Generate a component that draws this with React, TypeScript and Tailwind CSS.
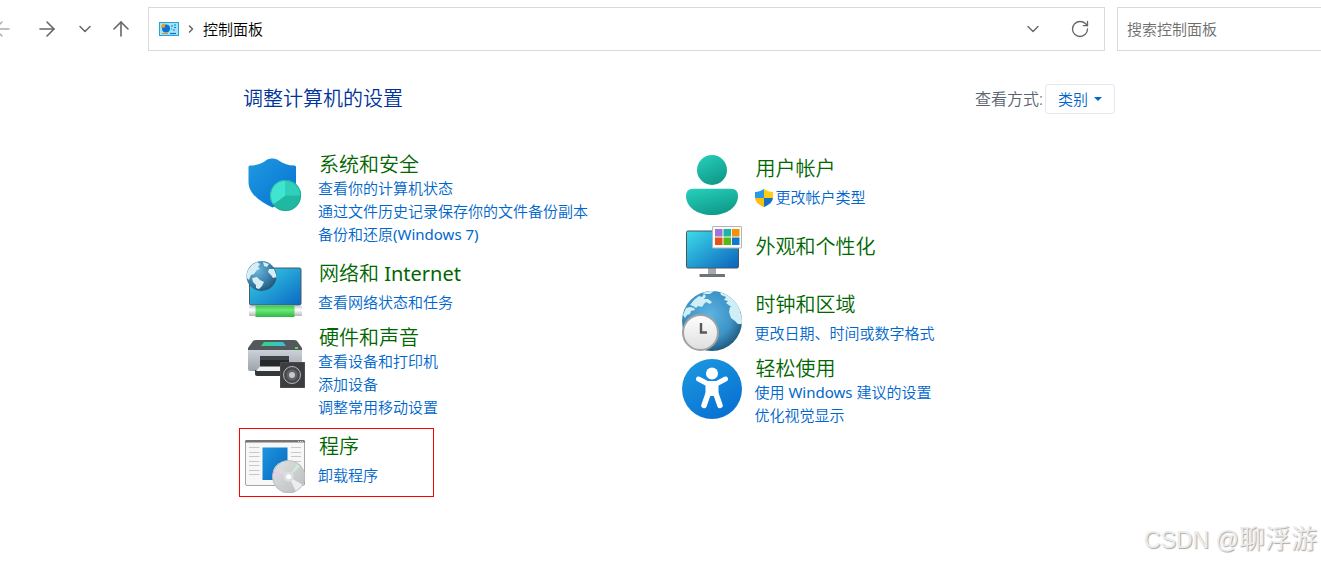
import type { ReactNode } from 'react';
import { ArrowLeft, ArrowRight, ArrowUp, ChevronDown, ChevronRight, RotateCw } from 'lucide-react';

type Category = {
  title: string;
  icon: ReactNode;
  links: string[];
  shielded?: boolean;
  marked?: boolean;
};

function SecurityIcon() {
  return (
    <svg viewBox="0 0 60 60" className="size-15 shrink-0" aria-hidden="true">
      <defs>
        <linearGradient id="shieldBlue" x1="0" y1="0" x2="1" y2="1">
          <stop offset="0" stopColor="#1f9ae0" />
          <stop offset="1" stopColor="#0670d2" />
        </linearGradient>
      </defs>
      <path d="M5 10.500C12 10.500 17 8.500 21.500 5C25 3 29.500 3 33 5C37.500 8.500 43 10.500 49.500 10.500Q51 10.500 51 12V27C51 39 40 47 27.500 52.500C14 46.500 3.500 38 3.500 27V12Q3.500 10.500 5 10.500Z" fill="url(#shieldBlue)" />
      <circle cx="40.500" cy="40.500" r="15.500" fill="#1fb8a2" />
      <path d="M40.500 40.500V25A15.500 15.500 0 0 0 28 49.500Z" fill="#3fe5d0" />
      <path d="M40.500 40.500V25A15.500 15.500 0 0 1 56 40.500Z" fill="#30cfb9" />
      <circle cx="40.500" cy="40.500" r="15.200" fill="none" stroke="#189c8a" strokeWidth="0.600" />
    </svg>
  );
}

function NetworkIcon() {
  return (
    <svg viewBox="0 0 60 60" className="size-15 shrink-0" aria-hidden="true">
      <defs>
        <linearGradient id="netScreen" x1="0" y1="0" x2="1" y2="1">
          <stop offset="0" stopColor="#38d5e6" />
          <stop offset="1" stopColor="#0b68c4" />
        </linearGradient>
        <radialGradient id="netGlobe" cx="0.35" cy="0.3" r="0.8">
          <stop offset="0" stopColor="#6fb7dc" />
          <stop offset="0.6" stopColor="#387da8" />
          <stop offset="1" stopColor="#1d4d70" />
        </radialGradient>
        <linearGradient id="netPipe" x1="0" y1="0" x2="0" y2="1">
          <stop offset="0" stopColor="#38c94c" />
          <stop offset="0.4" stopColor="#6ee878" />
          <stop offset="1" stopColor="#2eb743" />
        </linearGradient>
        <linearGradient id="netCap" x1="0" y1="0" x2="0" y2="1">
          <stop offset="0" stopColor="#c9cdd0" />
          <stop offset="0.4" stopColor="#ffffff" />
          <stop offset="1" stopColor="#b3b8bc" />
        </linearGradient>
        <clipPath id="netClip">
          <circle cx="16.500" cy="16" r="15" />
        </clipPath>
      </defs>
      <rect x="4.500" y="8" width="51.500" height="37" rx="1.500" fill="url(#netScreen)" stroke="#4b5963" />
      <rect x="4" y="46" width="53" height="10" rx="1" fill="url(#netCap)" />
      <rect x="10.500" y="45.500" width="39" height="11.500" fill="url(#netPipe)" />
      <circle cx="16.500" cy="16" r="15" fill="url(#netGlobe)" />
      <g clipPath="url(#netClip)" fill="#d5edf3">
        <path d="M3 10L7 5L12 2L15 4L13 7L15 9L12 10L9 14L6 15L4 20L1 17Z" />
        <path d="M18 2L24 4L22 7L19 6Z" />
        <path d="M24 9L29 9L32 17L28 18L26 15L23 12Z" />
        <path d="M7 18L12 17L15 20L19 22L17 26L14 29L11 28L11 25L8 22Z" />
      </g>
    </svg>
  );
}

function HardwareIcon() {
  return (
    <svg viewBox="0 0 60 60" className="size-15 shrink-0" aria-hidden="true">
      <defs>
        <linearGradient id="printerBody" x1="0" y1="0" x2="0" y2="1">
          <stop offset="0" stopColor="#ccd1d8" />
          <stop offset="1" stopColor="#9ba3ad" />
        </linearGradient>
        <linearGradient id="printerGlow" x1="0" y1="0" x2="1" y2="0">
          <stop offset="0" stopColor="#33d67a" />
          <stop offset="1" stopColor="#38bfe0" />
        </linearGradient>
      </defs>
      <path d="M11 12H49Q51 12 52 13L57 20V23H3V20L8 13Q9 12 11 12Z" fill="#53585e" />
      <path d="M19 14H38L41 18H16Z" fill="url(#printerGlow)" />
      <rect x="50" y="19" width="3" height="2" fill="#52df52" />
      <path d="M3 22H57V42Q57 43 56 43H5Q3 43 3 41Z" fill="url(#printerBody)" />
      <rect x="15" y="28" width="29" height="11" fill="#25282c" />
      <rect x="15" y="28" width="29" height="4" fill="#3f4449" />
      <path d="M10 42H40V48H12Q10 48 10 46Z" fill="#34383c" />
      <path d="M15 38.500H42V43H11Z" fill="#eef0f2" />
      <rect x="35" y="34" width="25" height="26" rx="1" fill="#3d3d3f" />
      <rect x="35.500" y="34.500" width="24" height="25" rx="1" fill="none" stroke="#4c4c4f" />
      <circle cx="47" cy="47" r="8.500" fill="#49494d" stroke="#b3b6b9" strokeWidth="1" />
      <circle cx="47" cy="47" r="5.500" fill="#626468" />
      <circle cx="47" cy="47" r="3" fill="#c7cacc" />
    </svg>
  );
}

function ProgramsIcon() {
  const lines = [14, 19, 23, 28, 32, 37, 41];
  return (
    <svg viewBox="0 0 60 60" className="size-15 shrink-0" aria-hidden="true">
      <defs>
        <linearGradient id="appBlue" x1="0" y1="0" x2="1" y2="1">
          <stop offset="0" stopColor="#1c95dd" />
          <stop offset="1" stopColor="#0967c0" />
        </linearGradient>
        <linearGradient id="disc" x1="0" y1="0" x2="1" y2="1">
          <stop offset="0" stopColor="#e2e4e5" />
          <stop offset="0.5" stopColor="#cdd0d1" />
          <stop offset="1" stopColor="#b8bcbe" />
        </linearGradient>
      </defs>
      <rect x="0.500" y="7.500" width="59" height="45" rx="1.500" fill="#f7f7f7" stroke="#a5a5a5" />
      <path d="M0 9.500V8.500Q0 7 1.500 7H58.500Q60 7 60 8.500V9.500Z" fill="#747474" />
      <path d="M53 8.500H58" stroke="#d8d8d8" strokeDasharray="1 1" />
      {lines.map((y) => (
        <path key={y} d={`M4 ${y}.5H14.500M46 ${y}.5H56`} stroke="#c6c8c9" />
      ))}
      <rect x="17.500" y="14.500" width="25" height="32.500" fill="url(#appBlue)" />
      <circle cx="43.700" cy="43.700" r="16.500" fill="url(#disc)" />
      <path d="M43.700 43.700L28 38A16.500 16.500 0 0 1 34 30Z" fill="#d9dcdd" />
      <path d="M43.700 43.700L29 37.500L28 40.500Z" fill="#efc6ee" />
      <path d="M43.700 43.700L52 31L55 33.500Z" fill="#cfead6" />
      <path d="M43.700 43.700L58 52A16.500 16.500 0 0 1 51 58.500Z" fill="#eceded" />
      <circle cx="43.700" cy="43.700" r="16.200" fill="none" stroke="#b0b4b6" strokeWidth="0.600" />
      <circle cx="43.700" cy="43.700" r="5" fill="#dcdedf" />
      <circle cx="43.700" cy="43.700" r="2.500" fill="#ffffff" />
    </svg>
  );
}

function UserIcon() {
  return (
    <svg viewBox="0 0 60 60" className="size-15 shrink-0" aria-hidden="true">
      <defs>
        <linearGradient id="userTeal" x1="0" y1="0" x2="0.5" y2="1">
          <stop offset="0" stopColor="#27d1bd" />
          <stop offset="1" stopColor="#109c8b" />
        </linearGradient>
      </defs>
      <circle cx="30" cy="15" r="15" fill="url(#userTeal)" />
      <path d="M11 33.700H49Q56 33.700 56 41C56 52 45 60 30 60S4 52 4 41Q4 33.700 11 33.700Z" fill="url(#userTeal)" />
    </svg>
  );
}

function AppearanceIcon() {
  return (
    <svg viewBox="0 0 60 60" className="size-15 shrink-0" aria-hidden="true">
      <defs>
        <linearGradient id="lookScreen" x1="0" y1="0" x2="1" y2="1">
          <stop offset="0" stopColor="#3ddcea" />
          <stop offset="1" stopColor="#0a62bd" />
        </linearGradient>
      </defs>
      <rect x="26" y="45" width="8" height="7" fill="#a6abb0" />
      <rect x="17.500" y="51" width="25.500" height="3" rx="0.500" fill="#6c747b" />
      <rect x="4.500" y="8" width="52" height="37" rx="1.500" fill="url(#lookScreen)" stroke="#4a555e" />
      <rect x="30.500" y="3.500" width="29" height="21.500" rx="0.500" fill="#fbfbfb" stroke="#b5b5b5" />
      <rect x="33" y="6" width="7.500" height="7.500" fill="#a074da" />
      <rect x="41.500" y="6" width="7.500" height="7.500" fill="#1bb5a2" />
      <rect x="50" y="6" width="7.500" height="7.500" fill="#f59107" />
      <rect x="33" y="14.500" width="7.500" height="7.500" fill="#e55414" />
      <rect x="41.500" y="14.500" width="7.500" height="7.500" fill="#57b910" />
      <rect x="50" y="14.500" width="7.500" height="7.500" fill="#0b78d2" />
    </svg>
  );
}

function ClockIcon() {
  return (
    <svg viewBox="0 0 60 60" className="size-15 shrink-0" aria-hidden="true">
      <defs>
        <radialGradient id="bigGlobe" cx="0.45" cy="0.4" r="0.65">
          <stop offset="0" stopColor="#5db5e2" />
          <stop offset="0.6" stopColor="#3d93c6" />
          <stop offset="1" stopColor="#1c506f" />
        </radialGradient>
        <linearGradient id="clockFace" x1="0" y1="0" x2="0" y2="1">
          <stop offset="0" stopColor="#ffffff" />
          <stop offset="1" stopColor="#dedede" />
        </linearGradient>
        <clipPath id="bigClip">
          <circle cx="30" cy="30" r="30" />
        </clipPath>
      </defs>
      <circle cx="30" cy="30" r="30" fill="url(#bigGlobe)" />
      <g clipPath="url(#bigClip)" fill="#d0eef5">
        <path d="M1 24L4 17L8 16L12 17L13 19L9 20L8 23L5 24L3 27Z" />
        <path d="M8 14L12 9L17 5L20 6L22 3L24 5L22 8L26 8L30 11L28 13L24 11L22 13L20 16L16 15L14 17L11 15Z" />
        <path d="M20 2L28 0L32 0L28 3L23 3Z" />
        <path d="M38 1L48 5L55 12L59 20L56 22L52 17L48 15L44 12L46 10L42 9L44 6L39 4Z" />
        <path d="M48 16L53 15L57 20L60 24L60 33L56 33L53 30L49 27L47 21Z" />
      </g>
      <circle cx="18.500" cy="41.500" r="17.500" fill="url(#clockFace)" stroke="#a3a1a1" strokeWidth="2" />
      <path d="M19 32V41.500H25" fill="none" stroke="#595959" strokeWidth="2.400" />
    </svg>
  );
}

function EaseIcon() {
  return (
    <svg viewBox="0 0 60 60" className="size-15 shrink-0" aria-hidden="true">
      <defs>
        <linearGradient id="easeBlue" x1="0" y1="0" x2="0.6" y2="1">
          <stop offset="0" stopColor="#1e9ae1" />
          <stop offset="1" stopColor="#0873d3" />
        </linearGradient>
      </defs>
      <circle cx="30" cy="30" r="30" fill="url(#easeBlue)" />
      <circle cx="30" cy="14.500" r="6" fill="white" />
      <path d="M16.500 20L25 24.500H35L43.500 20" fill="none" stroke="white" strokeWidth="5" strokeLinecap="round" strokeLinejoin="round" />
      <path d="M23.500 23H36.500V34L37 37H23L23.500 34Z" fill="white" />
      <path d="M26 35L22 46.500M34 35L38 46.500" stroke="white" strokeWidth="5.500" strokeLinecap="round" />
    </svg>
  );
}

function AdminShield() {
  return (
    <svg viewBox="0 0 18 18" className="size-4.5 shrink-0" aria-hidden="true">
      <defs>
        <clipPath id="adminClip">
          <path d="M0 3C4 3 6.500 1.500 9 0C11.500 1.500 14 3 18 3V8C18 13 14 16 9 18C4 16 0 13 0 8Z" />
        </clipPath>
      </defs>
      <g clipPath="url(#adminClip)">
        <rect width="9" height="9" fill="#2a9be3" />
        <rect x="9" width="9" height="9" fill="#ffcb14" />
        <rect y="9" width="9" height="9" fill="#fdbc10" />
        <rect x="9" y="9" width="9" height="9" fill="#1673c4" />
      </g>
    </svg>
  );
}

function PanelIcon() {
  return (
    <svg viewBox="0 0 20 14" className="h-3.5 w-5" aria-hidden="true">
      <rect x="0.500" y="0.500" width="19" height="13" fill="#a2e3fa" stroke="#22a3dc" />
      <circle cx="7" cy="6.500" r="4" fill="#0a74cf" />
      <path d="M6 5.500V1.500A4 4 0 0 0 2 5.500Z" fill="#f59a1c" />
      <path d="M12 4H14M12 7H13M15 3H17M15 5.500H17M14 8H16" stroke="#1676c2" />
      <path d="M3 11.500H9" stroke="#f08a1a" strokeWidth="1.200" />
      <path d="M11 11.500H17" stroke="#126fc4" strokeWidth="1.200" />
    </svg>
  );
}

const leftCategories: Category[] = [
  {
    title: '系统和安全',
    icon: <SecurityIcon />,
    links: ['查看你的计算机状态', '通过文件历史记录保存你的文件备份副本', '备份和还原(Windows 7)'],
  },
  { title: '网络和 Internet', icon: <NetworkIcon />, links: ['查看网络状态和任务'] },
  { title: '硬件和声音', icon: <HardwareIcon />, links: ['查看设备和打印机', '添加设备', '调整常用移动设置'] },
  { title: '程序', icon: <ProgramsIcon />, links: ['卸载程序'], marked: true },
];

const rightCategories: Category[] = [
  { title: '用户帐户', icon: <UserIcon />, links: ['更改帐户类型'], shielded: true },
  { title: '外观和个性化', icon: <AppearanceIcon />, links: [] },
  { title: '时钟和区域', icon: <ClockIcon />, links: ['更改日期、时间或数字格式'] },
  { title: '轻松使用', icon: <EaseIcon />, links: ['使用 Windows 建议的设置', '优化视觉显示'] },
];

// Spacing of the text block depends on how many task links sit under the title
function textSpacing(count: number) {
  if (count === 0) return 'pt-3.5';
  if (count === 1) return 'pt-1 gap-[5px]';
  return 'pb-1.5';
}

// Latin words take the regular weight, Chinese stays a step lighter
function MixedText({ text }: { text: string }) {
  return (
    <span>
      {text.split(/([A-Za-z0-9() ]+)/).map((part, index) =>
        index % 2 === 1 ? (
          <span key={index} className="font-normal">
            {part}
          </span>
        ) : (
          part
        ),
      )}
    </span>
  );
}

function CategoryItem({ title, icon, links, shielded, marked }: Category) {
  return (
    <section
      className={`flex min-h-16 items-start gap-[13px] pl-[5px] ${marked ? 'w-[193px] pb-[3px] outline outline-[#ff0000]' : ''}`}
    >
      <div className="pt-1">{icon}</div>
      <div className={`flex flex-col ${textSpacing(links.length)}`}>
        <h2 className="pt-0.5 pl-px text-[20px] leading-[24px] font-[350] text-[#006600]">
          <a href="#">
            <MixedText text={title} />
          </a>
        </h2>
        {links.length > 0 && (
          <ul className="text-[15px] leading-[23px] text-[#0066cc]">
            {links.map((link) => (
              <li key={link}>
                <a href="#" className="inline-flex items-center gap-[3px]">
                  {shielded && <AdminShield />}
                  <MixedText text={link} />
                </a>
              </li>
            ))}
          </ul>
        )}
      </div>
    </section>
  );
}

function Toolbar() {
  return (
    <header className="flex items-center pt-[7px]">
      <nav className="flex w-[148px] shrink-0 items-center text-[#666666]">
        <button type="button" aria-label="后退" className="-ml-2.5 text-[#aaaaaa]">
          <ArrowLeft size={24} strokeWidth={1.4} />
        </button>
        <button type="button" aria-label="前进" className="ml-[21px]">
          <ArrowRight size={24} strokeWidth={1.6} />
        </button>
        <button type="button" aria-label="最近浏览的位置" className="ml-4">
          <ChevronDown size={20} strokeWidth={1.8} />
        </button>
        <button type="button" aria-label="向上" className="ml-3.5">
          <ArrowUp size={24} strokeWidth={1.6} />
        </button>
      </nav>
      <div className="flex h-11 flex-1 items-center border border-[#d9d9d9] pr-3.5 pl-2.5">
        <PanelIcon />
        <ChevronRight size={12} strokeWidth={3} className="mx-[6px] text-[#666666]" />
        <a href="#" className="flex-1 text-[15px] text-black">
          控制面板
        </a>
        <button type="button" aria-label="展开" className="text-[#666666]">
          <ChevronDown size={20} strokeWidth={1.6} />
        </button>
        <button type="button" aria-label="刷新" className="ml-[27px] text-[#666666]">
          <RotateCw size={20} strokeWidth={1.6} />
        </button>
      </div>
      <input
        type="search"
        aria-label="搜索控制面板"
        placeholder="搜索控制面板"
        className="ml-3 h-11 w-[204px] shrink-0 border border-r-0 border-[#d9d9d9] px-[9px] text-[15px] outline-none placeholder:text-[#6d6d6d]"
      />
    </header>
  );
}

export default function App() {
  return (
    <div className="relative min-h-screen overflow-hidden bg-white font-['Noto_Sans','Noto_Sans_CJK_SC',sans-serif] font-[350]">
      <Toolbar />
      <main className="px-6 pt-[33px] lg:pr-[206px] lg:pl-60">
        <div className="flex items-center justify-between pl-[3px]">
          <h1 className="text-[20px] leading-[30px] font-[350] text-[#003399]">调整计算机的设置</h1>
          <div className="flex items-center gap-0.5">
            <label htmlFor="view" className="text-[16px] text-[#5a6470]">
              查看方式:
            </label>
            <div className="relative">
              <select
                id="view"
                className="h-[30px] w-[70px] appearance-none rounded-[3px] border border-[#e1e8ef] bg-white pl-3 text-[15px] text-[#0066cc]"
              >
                <option>类别</option>
              </select>
              <svg viewBox="0 0 8 4" className="pointer-events-none absolute top-[13px] right-[13px] h-1 w-2" aria-hidden="true">
                <path d="M0 0H8L4 4Z" fill="#0066cc" />
              </svg>
            </div>
          </div>
        </div>
        <div className="grid grid-cols-2 pt-[37px] pr-0.5">
          <div className="flex flex-col gap-1">
            {leftCategories.map((category) => (
              <CategoryItem key={category.title} {...category} />
            ))}
          </div>
          <div className="flex flex-col gap-1">
            {rightCategories.map((category) => (
              <CategoryItem key={category.title} {...category} />
            ))}
          </div>
        </div>
      </main>
      <p className="absolute right-1 bottom-1 font-['Liberation_Sans','Noto_Sans_CJK_SC',sans-serif] text-[23px] leading-9 text-[#ececec] [text-shadow:1px_1px_1px_#a8a8a8]">
        CSDN @<span className="text-[26px]">聊浮游</span>
      </p>
    </div>
  );
}
